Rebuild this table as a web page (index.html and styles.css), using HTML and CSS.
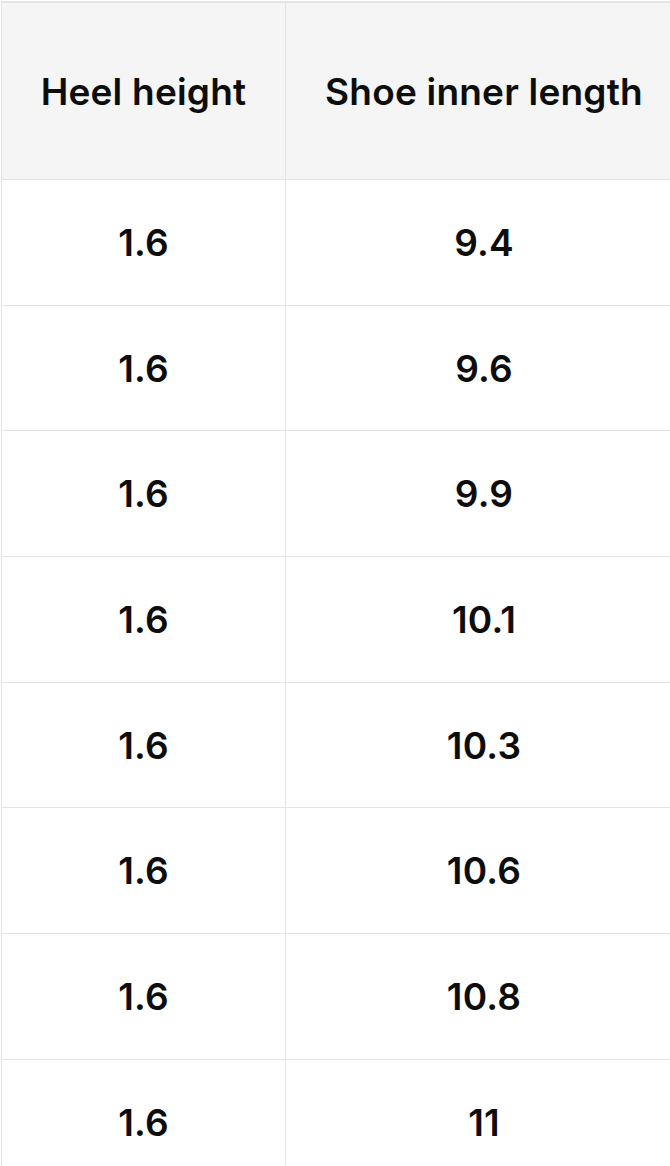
FILE: index.html
```html
<!DOCTYPE html>
<html>
<head>
<meta charset="utf-8">
<link rel="stylesheet" href="styles.css">
</head>
<body>
<div class="wrap">
<table class="size-table">
  <thead>
    <tr><th>Heel height</th><th>Shoe inner length</th></tr>
  </thead>
  <tbody>
    <tr><td>1.6</td><td>9.4</td></tr>
    <tr><td>1.6</td><td>9.6</td></tr>
    <tr><td>1.6</td><td>9.9</td></tr>
    <tr><td>1.6</td><td>10.1</td></tr>
    <tr><td>1.6</td><td>10.3</td></tr>
    <tr><td>1.6</td><td>10.6</td></tr>
    <tr><td>1.6</td><td>10.8</td></tr>
    <tr><td>1.6</td><td>11</td></tr>
  </tbody>
</table>
</div>
</body>
</html>
```
FILE: styles.css
```css
html, body {
  margin: 0;
  padding: 0;
  background: #ffffff;
  overflow: hidden;
}
.wrap {
  padding: 1px 0 0 1px;
  width: 700px;
}
.size-table {
  border-collapse: collapse;
  table-layout: fixed;
  width: 682px;
  font-family: Inter, "Noto Sans", sans-serif;
  color: #0d0d0d;
}
.size-table th,
.size-table td {
  border: 1px solid #e4e4e4;
  text-align: center;
  vertical-align: middle;
  padding: 0;
}
.size-table th:first-child,
.size-table td:first-child {
  width: 283px;
}
.size-table th {
  background: #f5f5f5;
  height: 176px;
  font-size: 37px;
  font-weight: 600;
  letter-spacing: 0.2px;
  border-top-width: 2px;
}
.size-table td {
  height: 124.7px;
  font-size: 37px;
  font-weight: 600;
  letter-spacing: 0.2px;
}
```
